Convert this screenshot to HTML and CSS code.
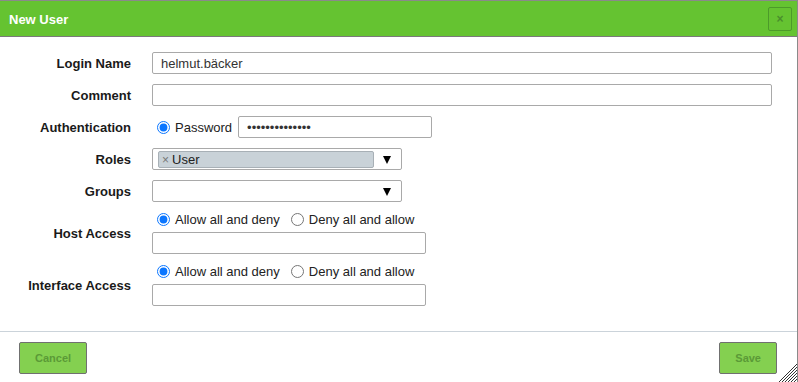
FILE: index.html
```html
<!DOCTYPE html>
<html>
<head>
<meta charset="utf-8">
<link rel="stylesheet" href="styles.css">
</head>
<body>
<div class="dialog">
  <div class="header">
    <span class="title">New User</span>
    <button class="close">×</button>
  </div>
  <div class="content">
    <form class="form">
      <label class="lbl">Login Name</label>
      <div class="field"><input class="text wide" type="text" value="helmut.bäcker"></div>

      <label class="lbl">Comment</label>
      <div class="field"><input class="text wide" type="text" value=""></div>

      <label class="lbl">Authentication</label>
      <div class="field inline">
        <label class="radio"><input type="radio" name="auth" checked><span>Password</span></label>
        <input class="text pw" type="password" value="12345678901234">
      </div>

      <label class="lbl">Roles</label>
      <div class="field">
        <div class="select">
          <span class="tag"><span class="tag-x">×</span>User</span>
          <span class="arrow"></span>
        </div>
      </div>

      <label class="lbl">Groups</label>
      <div class="field">
        <div class="select">
          <span class="arrow"></span>
        </div>
      </div>

      <label class="lbl">Host Access</label>
      <div class="field stack">
        <div class="radios">
          <label class="radio"><input type="radio" name="host" checked><span>Allow all and deny</span></label>
          <label class="radio"><input type="radio" name="host"><span>Deny all and allow</span></label>
        </div>
        <input class="text mid" type="text" value="">
      </div>

      <label class="lbl">Interface Access</label>
      <div class="field stack">
        <div class="radios">
          <label class="radio"><input type="radio" name="iface" checked><span>Allow all and deny</span></label>
          <label class="radio"><input type="radio" name="iface"><span>Deny all and allow</span></label>
        </div>
        <input class="text mid" type="text" value="">
      </div>
    </form>
  </div>
  <div class="footer">
    <button class="btn">Cancel</button>
    <button class="btn">Save</button>
  </div>
  <svg class="grip" width="22" height="22" viewBox="0 0 22 22">
    <g stroke="#333" stroke-width="1">
      <line x1="22" y1="4" x2="4" y2="22"/>
      <line x1="22" y1="7" x2="7" y2="22"/>
      <line x1="22" y1="10" x2="10" y2="22"/>
      <line x1="22" y1="13" x2="13" y2="22"/>
      <line x1="22" y1="16" x2="16" y2="22"/>
      <line x1="22" y1="19" x2="19" y2="22"/>
    </g>
  </svg>
</div>
</body>
</html>
```

FILE: styles.css
```css
* { box-sizing: border-box; }
html, body {
  margin: 0;
  padding: 0;
  background: #fff;
  overflow: hidden;
}
body {
  font-family: "Liberation Sans", Arial, sans-serif;
  font-size: 13px;
  color: #222;
}
.dialog {
  position: relative;
  width: 798px;
  height: 400px;
  border-top: 1px solid #8a8a8a;
  border-right: 1px solid #8a8a8a;
  background: #fff;
}
.header {
  height: 36px;
  background: #65c331;
  border-bottom: 1px solid #7a7a7a;
  display: flex;
  align-items: center;
  justify-content: space-between;
  padding: 0 5px 0 9px;
}
.title {
  color: #fff;
  font-weight: bold;
  font-size: 13px;
  margin-top: 1px;
}
.close {
  width: 24px;
  height: 24px;
  margin-top: 1px;
  padding: 0;
  background: transparent;
  border: 1px solid #4c9a2a;
  border-radius: 2px;
  color: #4a8f2c;
  font-family: "Liberation Sans", Arial, sans-serif;
  font-size: 12px;
  font-weight: bold;
  line-height: 20px;
}
.content {
  padding: 15px 25px 25px 0;
  border-bottom: 1px solid #cbd3da;
}
.form {
  display: grid;
  grid-template-columns: 131px 1fr;
  column-gap: 21px;
  row-gap: 10px;
  margin: 0;
}
.lbl {
  font-weight: bold;
  text-align: right;
  align-self: center;
  color: #1a1a1a;
}
.field { min-width: 0; }
.inline {
  display: flex;
  align-items: center;
}
.text {
  display: block;
  height: 22px;
  border: 1px solid #a9a9a9;
  border-radius: 2px;
  padding: 0 8px;
  font-family: "Liberation Sans", Arial, sans-serif;
  font-size: 13px;
  color: #333;
  background: #fff;
  outline: none;
}
.wide { width: 100%; }
.pw { width: 194px; margin-left: 6px; }
.mid { width: 274px; }
.radio {
  display: inline-flex;
  align-items: center;
  color: #222;
}
.radio input {
  margin: 0 5px 0 5px;
  width: 13px;
  height: 13px;
  accent-color: #0b76ff;
}
.radios {
  display: flex;
  height: 15px;
  align-items: center;
  gap: 6px;
  margin-bottom: 5px;
}
.stack {
  display: flex;
  flex-direction: column;
}
.select {
  position: relative;
  width: 250px;
  height: 22px;
  border: 1px solid #a9a9a9;
  border-radius: 2px;
  background: #fff;
  display: flex;
  align-items: center;
}
.tag {
  display: flex;
  align-items: center;
  width: 216px;
  height: 17px;
  margin-left: 5px;
  margin-top: 1px;
  background: #c9d2d8;
  border: 1px solid #a8b0b6;
  border-radius: 2px;
  font-size: 13px;
  color: #222;
  padding-left: 3px;
}
.tag-x {
  color: #777;
  font-size: 12px;
  margin-right: 3px;
}
.arrow {
  position: absolute;
  left: 230px;
  top: 7px;
  width: 0;
  height: 0;
  border-left: 4.5px solid transparent;
  border-right: 4.5px solid transparent;
  border-top: 8px solid #000;
}
.footer {
  display: flex;
  justify-content: space-between;
  padding: 10px 20px 0 19px;
}
.btn {
  height: 32px;
  padding: 0 15px;
  background: #84d050;
  border: 1px solid #707070;
  border-radius: 2px;
  color: #5b9a37;
  font-family: "Liberation Sans", Arial, sans-serif;
  font-size: 11px;
  font-weight: bold;
}
.grip {
  position: absolute;
  right: 0;
  top: 359px;
}
```
